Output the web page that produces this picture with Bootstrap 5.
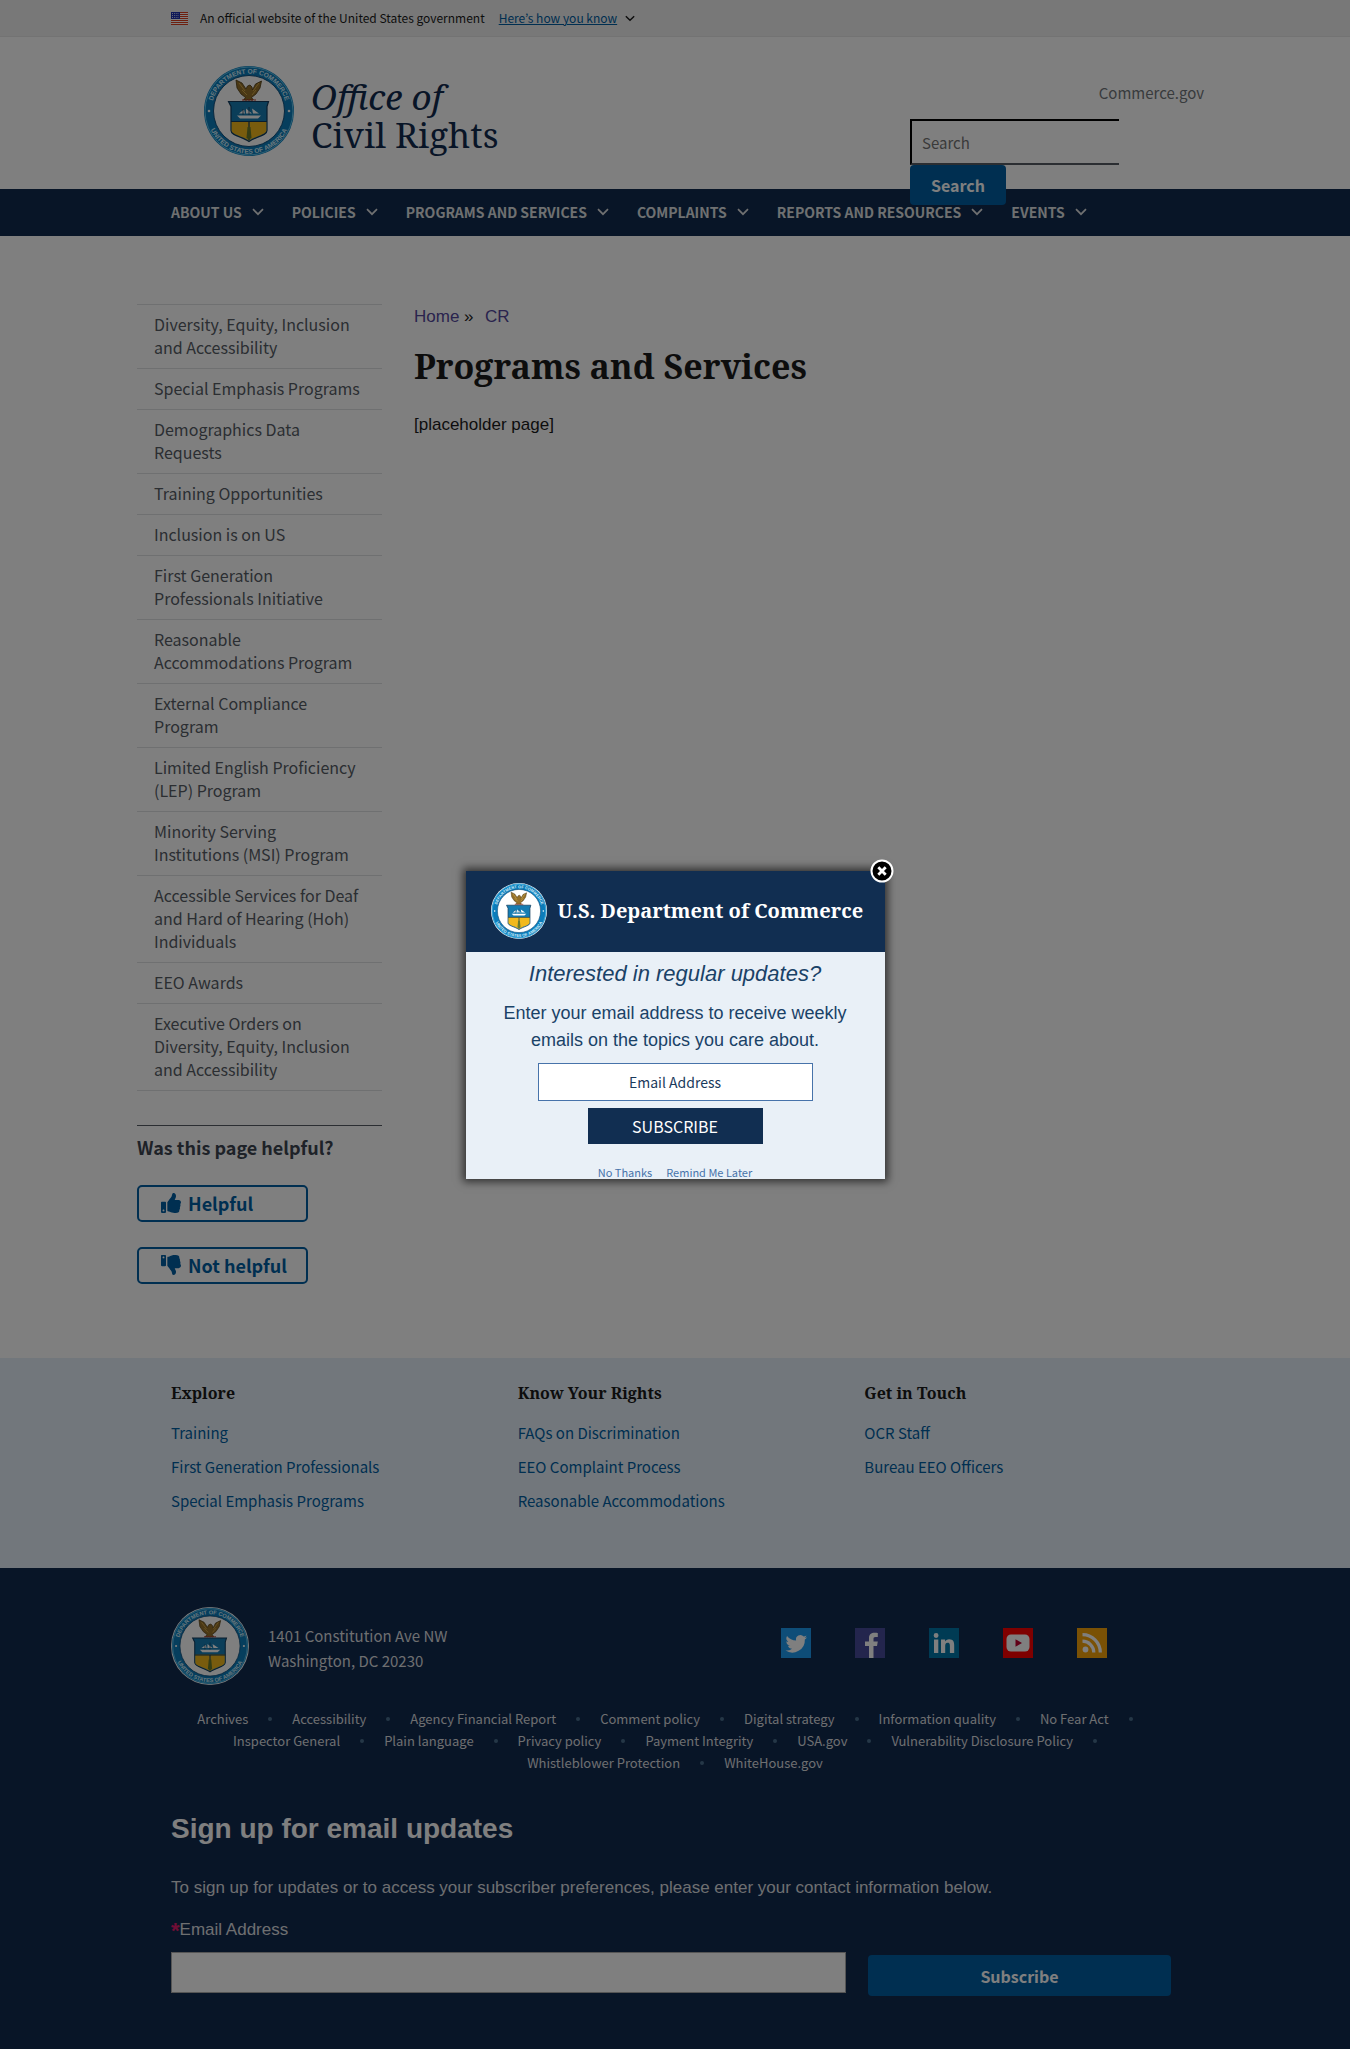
<!DOCTYPE html>
<html lang="en">
<head>
<meta charset="utf-8">
<meta name="viewport" content="width=device-width, initial-scale=1">
<title>Programs and Services | Office of Civil Rights</title>
<link href="https://cdn.jsdelivr.net/npm/bootstrap@5.3.0/dist/css/bootstrap.min.css" rel="stylesheet">
<style>
:root{--sans:"Noto Sans CJK JP","Noto Sans",sans-serif;--serif:"Noto Serif","DejaVu Serif Condensed","DejaVu Serif",serif;--arial:"Liberation Sans",Arial,sans-serif;--navy:#112a4e;--blue:#005ea2}
body{font-family:var(--sans);font-size:16px;line-height:24px;color:#1b1b1b;background:#fff}
a{text-decoration:none}
.wrap{width:100%;max-width:1072px;padding:0 32px;margin:0 auto}
.gov-banner{background:#f0f0f0;border-bottom:1px solid #e6e6e6;font-size:12px;line-height:20px;padding:8px 0}
.gov-banner a{color:var(--blue);text-decoration:underline;margin-left:14px}
.site-head{height:152px}
.brand{color:var(--navy);font-family:var(--serif);font-size:35px;line-height:38px;margin:28px 0 0 32px}
.brand:hover{color:var(--navy)}
.brand span{padding-top:10px}
.seal-lg{width:92px;height:92px;flex:none}
.seal-md{width:78px;height:78px;margin-right:19px;flex:none}
.seal-sm{width:56px;height:56px;flex:none}
.side-tools{width:294px;padding-top:43px;margin-right:-25px}
.side-tools .ext{color:#71767a;font-size:15px}
.side-tools form{margin-top:14px}
.find{width:209px;height:46px;border:2px solid #565c65;border-color:#000 transparent #565c65 #000;border-right:0;border-radius:0;padding:0 10px;font-size:15px;color:#1b1b1b;background:#fff;display:block}
.find::placeholder{color:#757575;opacity:1}
.btn-solid{background:var(--blue);color:#fff;font-weight:700;font-size:16px;line-height:20px;border:0;border-radius:4px;padding:10px 21px}
.main-nav{background:var(--navy)}
.main-nav .menu{column-gap:28px}
.main-nav .nav-link{color:#dfe1e2;font-weight:700;font-size:14px;line-height:20px;padding:13px 0 14px;display:flex;align-items:center;gap:10px}
.columns{padding:68px 0 74px}
.layout{max-width:1076px;margin:0 auto}
.sidebar{width:245px;flex:none}
.sidebar .list-group-item{background:none;border-color:#dfe1e2;padding:8px 20px 9px 17px;line-height:23px;border-width:0 0 1px}
.sidebar .list-group{border-top:1px solid #dfe1e2;border-radius:0}
.sidebar .list-group a{color:#565c65}
.poll{border-top:1px solid #565c65;margin-top:34px;padding-top:9px}
.poll h2{font-size:18px;line-height:24px;font-weight:700;color:#3d4551;margin:0 0 26px}
.vote{width:171px;border:2px solid var(--blue);border-radius:5px;background:none;color:var(--blue);font-weight:700;font-size:18px;line-height:22px;padding:5px 22px 6px;margin-bottom:25px;display:flex;align-items:center;gap:7px;white-space:nowrap}
.vote svg{flex:none}
.article{font-family:var(--arial);font-size:17px}
.trail{padding-top:1px}
.trail a{color:#54479c}
.trail a+a{margin-left:2px}
.article h1{font-family:var(--serif);font-weight:700;font-size:34px;line-height:44px;margin:15px 0 25px}
.foot-top{background:#e4eff8;padding:23px 0 45px}
.foot-top h3{font-family:var(--serif);font-size:16px;line-height:24px;font-weight:700;margin:0 0 16px}
.foot-top a{color:var(--blue);font-size:15px;line-height:24px;display:block;margin-bottom:10px}
.foot-top .trio{gap:32px}
.foot-top .trio>div{flex:1 1 0}
.foot-bot{background:var(--navy);color:#dcdee0;padding:39px 0 54px}
.addr{font-size:15px;line-height:25px;padding-top:4px}
.social{gap:44px;margin-right:72px;padding-bottom:6px}
.social a{display:block;line-height:0}
.small-links{font-size:13px;line-height:22px;padding:23px 24px 0}
.small-links a{color:#dcdee0}
.small-links li{display:flex;align-items:center}
.small-links li:not(:last-child)::after{content:"";width:4px;height:4px;border-radius:50%;background:#4a6f8f;margin:0 20px}
.signup{font-family:var(--arial);font-size:17px;padding-top:37px}
.signup h2{font-size:28px;line-height:36px;font-weight:700;color:#fff;margin:0 0 29px}
.signup label{margin-bottom:10px;display:block}
.signup p{margin-bottom:18px}
.signup .req{color:#e31c6d;font-weight:700;font-size:22px;line-height:20px;vertical-align:-3px}
.signup .mail{width:675px;height:41px;border:1px solid #aaa;border-radius:0;background:#fff}
.signup .ask-row{gap:22px}
.signup .btn-solid{width:303px;margin:3px 0 0;font-family:var(--sans);height:41px}
.pop{max-width:419px}
.pop .modal-content{border:0;border-radius:0;background:none;box-shadow:0 0 8px 3px rgba(0,0,0,.6)}
.pop-clip{height:308px;overflow:hidden;background:#e9f0f7;color:#1a4267;font-family:var(--arial);text-align:center}
.pop-head{background:#112e51;height:81px;padding-left:25px;gap:11px}
.pop-head h2{font-family:var(--serif);font-size:20px;line-height:28px;font-weight:700;color:#fff;margin:0;white-space:nowrap}
.pop-clip .ask{font-size:22px;line-height:28px;font-style:italic;margin:8px 0 12px}
.pop-clip .tell{font-size:18px;line-height:27px;margin:0 32px 9px}
.pop-mail{width:275px;height:38px;border:1px solid #4773aa;background:#fff;text-align:center;font-family:var(--sans);font-size:14px;display:block;margin:0 auto 7px}
.pop-mail::placeholder{color:#1a3a5c;opacity:1}
.pop-go,.pop-go:hover{width:175px;height:36px;border:0;border-radius:0;background:#112e51;color:#fff;font-family:var(--sans);font-size:16px;line-height:20px;padding:0;display:block;margin:0 auto 21px}
.pop-links{font-family:var(--sans);font-size:11px;line-height:14px;gap:14px}
.pop-links a{color:#4773aa}
.pop-x{position:absolute;top:-12px;right:-9px;width:24px;height:24px;border:0;padding:0;background:none;line-height:0}
</style>
<script src="https://cdn.jsdelivr.net/npm/bootstrap@5.3.0/dist/js/bootstrap.bundle.min.js"></script>
</head>
<body>
<svg class="d-none" aria-hidden="true">
<defs><path id="arc-top" d="M8.500 46a37.500 37.500 0 0 1 75 0"/><path id="arc-low" d="M3.300 46a42.700 42.700 0 0 0 85.400 0"/></defs>
<symbol id="seal" viewBox="0 0 92 92">
<circle cx="46" cy="46" r="46" fill="#fff"/>
<circle cx="46" cy="46" r="45" fill="#0c7cba"/>
<circle cx="46" cy="46" r="44" fill="none" stroke="#5cc3ec" stroke-width="1"/>
<g font-family="Liberation Sans" font-weight="700" font-size="6.600" fill="#d3effb" text-anchor="middle"><text><textPath href="#arc-top" startOffset="50%">DEPARTMENT OF COMMERCE</textPath></text><text><textPath href="#arc-low" startOffset="50%">UNITED STATES OF AMERICA</textPath></text></g>
<circle cx="6" cy="46" r="1.300" fill="#fff"/><circle cx="86" cy="46" r="1.300" fill="#fff"/>
<circle cx="46" cy="46" r="35.500" fill="#fff" stroke="#12507e" stroke-width="1"/>
<path d="M33 15l6 3 4 6 1.500-3 2.500-1 2 2 .5 3 3-6 6-3-1.500 7-4 6-4.500 3.500 2 2.500h-10l2-2.500-4.500-3.500-4-6z" fill="#94702a" stroke="#4d3a12" stroke-width=".8"/>
<path d="M36 18l6 8M56 18l-6 8M39 25l5 5M53 25l-4 5" stroke="#d9ae4c" stroke-width=".9" fill="none"/>
<path d="M39 35h14" stroke="#c8372d" stroke-width="1.200" stroke-dasharray="2 1"/>
<path d="M25.500 36.500h40l-1.500 5v24c0 5-11 6-18 11-7-5-18-6-18-11v-24z" fill="#167db3" stroke="#123b5c" stroke-width="1.200"/>
<path d="M28.600 56h34.800v9.500c0 4-10.400 5.500-17.400 10-7-4.500-17.400-6-17.400-10z" fill="#f2b91c"/>
<path d="M28 56.500h36M46 57v18" stroke="#123b5c" stroke-width="1.200"/>
<path d="M44.500 62h3l1 11-2.500 1.500-2.500-1.500z" fill="#6b7b2a"/>
<path d="M34 50.500h24l-3 3H37zM36 48.500l5-4 1 4zM43 48.500v-5l6 5zM50 48.500l-1-5 7 5z" fill="#fff"/>
<path d="M46 42v8M40 44v6" stroke="#123b5c" stroke-width=".8"/>
</symbol>
<symbol id="chev" viewBox="0 0 12 8"><path d="M1 1.200l5 5 5-5" fill="none" stroke="currentColor" stroke-width="1.700"/></symbol>
<symbol id="thumb" viewBox="0 0 512 512"><path fill="currentColor" d="M104 224H24c-13.300 0-24 10.700-24 24v240c0 13.300 10.700 24 24 24h80c13.300 0 24-10.700 24-24V248c0-13.300-10.700-24-24-24zM64 472c-13.300 0-24-10.700-24-24s10.700-24 24-24 24 10.700 24 24-10.700 24-24 24zM384 81.500c0 42.400-26 66.200-33.300 94.500h101.700c33.400 0 59.400 27.700 59.600 58.100.1 17.900-7.500 37.200-19.400 49.200l-.1.100c9.800 23.300 8.200 56-9.300 79.500 8.700 25.900-.1 57.700-16.400 74.800 4.300 17.600 2.200 32.600-6.100 44.600-20.200 29.100-70.400 29.500-112.800 29.500h-2.800c-47.900 0-87.100-17.500-118.600-31.500-15.800-7-36.500-15.800-52.200-16.100-6.500-.1-11.800-5.400-11.800-12v-213.800c0-3.200 1.300-6.300 3.600-8.500 39.200-38.800 56.100-79.900 88.300-112.100 14.700-14.700 20-36.900 25.200-58.300C283.700 41.500 293.200 0 312 0c24 0 72 8 72 81.500z"/></symbol>
</svg>

<div class="gov-banner">
<div class="wrap d-flex align-items-center">
<svg width="17" height="13" viewBox="0 0 17 13" class="me-2" role="img" aria-label="U.S. flag"><path fill="#fff" d="M0 0h17v13H0z"/><path stroke="#db3e1f" stroke-width="1" d="M0 .5h17M0 2.500h17M0 4.500h17M0 6.500h17M0 8.500h17M0 10.500h17M0 12.500h17"/><path fill="#1e33b1" d="M0 0h9v7H0z"/><path d="M1 1.500h7M1 3.500h7M1 5.500h7" stroke="#fff" stroke-width=".8" stroke-dasharray="1 1.200"/></svg>
<span class="ms-1">An official website of the United States government</span>
<a href="#">Here’s how you know</a>
<svg width="10" height="7" class="ms-2"><use href="#chev"/></svg>
</div>
</div>

<header>
<div class="site-head">
<div class="wrap d-flex justify-content-between align-items-start">
<a class="brand d-flex align-items-center gap-3" href="#"><svg class="seal-lg" role="img" aria-label="Department of Commerce seal"><use href="#seal"/></svg><span><em>Office of</em><br>Civil Rights</span></a>
<div class="side-tools">
<div class="text-end"><a class="ext" href="#">Commerce.gov</a></div>
<form role="search">
<input class="find" type="search" placeholder="Search" aria-label="Search">
<button class="btn btn-solid position-relative" type="button">Search</button>
</form>
</div>
</div>
</div>
<nav class="main-nav" aria-label="Primary">
<div class="wrap menu d-flex flex-wrap">
<a class="nav-link" href="#">ABOUT US<svg width="12" height="8"><use href="#chev"/></svg></a>
<a class="nav-link" href="#">POLICIES<svg width="12" height="8"><use href="#chev"/></svg></a>
<a class="nav-link" href="#">PROGRAMS AND SERVICES<svg width="12" height="8"><use href="#chev"/></svg></a>
<a class="nav-link" href="#">COMPLAINTS<svg width="12" height="8"><use href="#chev"/></svg></a>
<a class="nav-link" href="#">REPORTS AND RESOURCES<svg width="12" height="8"><use href="#chev"/></svg></a>
<a class="nav-link" href="#">EVENTS<svg width="12" height="8"><use href="#chev"/></svg></a>
</div>
</nav>
</header>

<div class="columns">
<div class="layout d-flex">
<aside class="sidebar">
<ul class="list-group">
<li class="list-group-item"><a href="#">Diversity, Equity, Inclusion and Accessibility</a></li>
<li class="list-group-item"><a href="#">Special Emphasis Programs</a></li>
<li class="list-group-item"><a href="#">Demographics Data Requests</a></li>
<li class="list-group-item"><a href="#">Training Opportunities</a></li>
<li class="list-group-item"><a href="#">Inclusion is on US</a></li>
<li class="list-group-item"><a href="#">First Generation Professionals Initiative</a></li>
<li class="list-group-item"><a href="#">Reasonable Accommodations Program</a></li>
<li class="list-group-item"><a href="#">External Compliance Program</a></li>
<li class="list-group-item"><a href="#">Limited English Proficiency (LEP) Program</a></li>
<li class="list-group-item"><a href="#">Minority Serving Institutions (MSI) Program</a></li>
<li class="list-group-item"><a href="#">Accessible Services for Deaf and Hard of Hearing (Hoh) Individuals</a></li>
<li class="list-group-item"><a href="#">EEO Awards</a></li>
<li class="list-group-item"><a href="#">Executive Orders on Diversity, Equity, Inclusion and Accessibility</a></li>
</ul>
<section class="poll">
<h2>Was this page helpful?</h2>
<button class="vote" type="button"><svg width="20" height="20"><use href="#thumb"/></svg>Helpful</button>
<button class="vote mb-0" type="button"><svg width="20" height="20" viewBox="0 0 20 20"><g transform="matrix(1 0 0 -1 0 20)"><use href="#thumb" width="20" height="20"/></g></svg>Not helpful</button>
</section>
</aside>
<main class="article ps-3 ms-3">
<nav class="trail" aria-label="Breadcrumb"><a href="#">Home</a> » &nbsp;<a href="#">CR</a></nav>
<h1>Programs and Services</h1>
<p class="mb-0">[placeholder page]</p>
</main>
</div>
</div>

<footer>
<div class="foot-top">
<div class="wrap d-flex trio">
<div><h3>Explore</h3><a href="#">Training</a><a href="#">First Generation Professionals</a><a href="#">Special Emphasis Programs</a></div>
<div><h3>Know Your Rights</h3><a href="#">FAQs on Discrimination</a><a href="#">EEO Complaint Process</a><a href="#">Reasonable Accommodations</a></div>
<div><h3>Get in Touch</h3><a href="#">OCR Staff</a><a href="#">Bureau EEO Officers</a></div>
</div>
</div>
<div class="foot-bot">
<div class="wrap">
<div class="d-flex align-items-center">
<svg class="seal-md" role="img" aria-label="Department of Commerce seal"><use href="#seal"/></svg>
<address class="addr mb-0 me-auto">1401 Constitution Ave NW<br>Washington, DC 20230</address>
<div class="social d-flex">
<a href="#" aria-label="Twitter"><svg width="30" height="30" viewBox="0 0 30 30"><path fill="#1d9bf0" d="M0 0h30v30H0z"/><path fill="#fff" transform="translate(4.500 5) scale(.9)" d="M24 4.600a10 10 0 0 1-2.800.8 5 5 0 0 0 2.100-2.700 10 10 0 0 1-3.100 1.200 4.900 4.900 0 0 0-8.400 4.500A14 14 0 0 1 1.700 3.200a4.900 4.900 0 0 0 1.500 6.500 5 5 0 0 1-2.200-.6 4.900 4.900 0 0 0 3.900 4.900 5 5 0 0 1-2.200.1 4.900 4.900 0 0 0 4.600 3.400A10 10 0 0 1 0 19.500 14 14 0 0 0 21.500 7.100 10 10 0 0 0 24 4.600z"/></svg></a>
<a href="#" aria-label="Facebook"><svg width="30" height="30" viewBox="0 0 30 30"><path fill="#474b9b" d="M0 0h30v30H0z"/><path fill="#fff" d="M14 30V18h-4v-4.500h4V10c0-3.700 2.300-5.300 5.600-5.300 1.500 0 2.800.1 3.200.2v4.200h-2.300c-1.800 0-2 .8-2 2v2.400h4.300L22 18h-3.500v12z"/></svg></a>
<a href="#" aria-label="LinkedIn"><svg width="30" height="30" viewBox="0 0 30 30"><path fill="#0077a8" d="M0 0h30v30H0z"/><path fill="#fff" d="M5 11.500h4.300V25H5zM7.100 5a2.400 2.400 0 1 1 0 4.900 2.400 2.400 0 0 1 0-4.900zM12 11.500h4.100v1.900c.6-1.100 2-2.200 4-2.200 4.300 0 5.100 2.800 5.100 6.400V25h-4.300v-6.600c0-1.600 0-3.600-2.200-3.600s-2.500 1.700-2.500 3.500V25H12z"/></svg></a>
<a href="#" aria-label="YouTube"><svg width="30" height="30" viewBox="0 0 30 30"><path fill="#f00" d="M0 0h30v30H0z"/><rect x="3.500" y="6.500" width="23" height="17" rx="4.500" fill="#fff"/><path fill="#c3002f" d="M12.500 11.200l6.500 3.800-6.500 3.800z"/></svg></a>
<a href="#" aria-label="RSS"><svg width="30" height="30" viewBox="0 0 30 30"><path fill="#f5a30a" d="M0 0h30v30H0z"/><circle cx="8.500" cy="21.500" r="2.900" fill="#fff"/><path d="M5.500 13.200a11.300 11.300 0 0 1 11.300 11.300M5.500 6.700a17.800 17.800 0 0 1 17.800 17.800" fill="none" stroke="#fff" stroke-width="3.200"/></svg></a>
</div>
</div>
<ul class="small-links list-unstyled d-flex flex-wrap justify-content-center mb-0">
<li><a href="#">Archives</a></li><li><a href="#">Accessibility</a></li><li><a href="#">Agency Financial Report</a></li><li><a href="#">Comment policy</a></li><li><a href="#">Digital strategy</a></li><li><a href="#">Information quality</a></li><li><a href="#">No Fear Act</a></li><li><a href="#">Inspector General</a></li><li><a href="#">Plain language</a></li><li><a href="#">Privacy policy</a></li><li><a href="#">Payment Integrity</a></li><li><a href="#">USA.gov</a></li><li><a href="#">Vulnerability Disclosure Policy</a></li><li><a href="#">Whistleblower Protection</a></li><li><a href="#">WhiteHouse.gov</a></li>
</ul>
<form class="signup">
<h2>Sign up for email updates</h2>
<p>To sign up for updates or to access your subscriber preferences, please enter your contact information below.</p>
<label for="mail"><span class="req">*</span>Email Address</label>
<div class="ask-row d-flex align-items-start"><input class="mail" id="mail" type="email"><button class="btn btn-solid" type="button">Subscribe</button></div>
</form>
</div>
</div>
</footer>

<div class="modal-backdrop show"></div>
<div class="modal show d-block" role="dialog" aria-modal="true" aria-labelledby="pop-title">
<div class="modal-dialog modal-dialog-centered pop">
<div class="modal-content">
<div class="pop-clip">
<div class="pop-head d-flex align-items-center"><svg class="seal-sm" role="img" aria-label="Department of Commerce seal"><use href="#seal"/></svg><h2 id="pop-title">U.S. Department of Commerce</h2></div>
<p class="ask">Interested in regular updates?</p>
<p class="tell">Enter your email address to receive weekly emails on the topics you care about.</p>
<input class="pop-mail" type="email" placeholder="Email Address" aria-label="Email Address">
<button class="btn pop-go" type="button">SUBSCRIBE</button>
<div class="pop-links d-flex justify-content-center"><a href="#">No Thanks</a><a href="#">Remind Me Later</a></div>
</div>
<button class="pop-x" type="button" aria-label="Close"><svg width="24" height="24" viewBox="0 0 24 24"><circle cx="12" cy="12" r="10.500" fill="#000" stroke="#fff" stroke-width="2"/><path d="M8.300 8.300l7.400 7.400M15.700 8.300l-7.400 7.400" stroke="#fff" stroke-width="2.800"/></svg></button>
</div>
</div>
</div>
</body>
</html>
